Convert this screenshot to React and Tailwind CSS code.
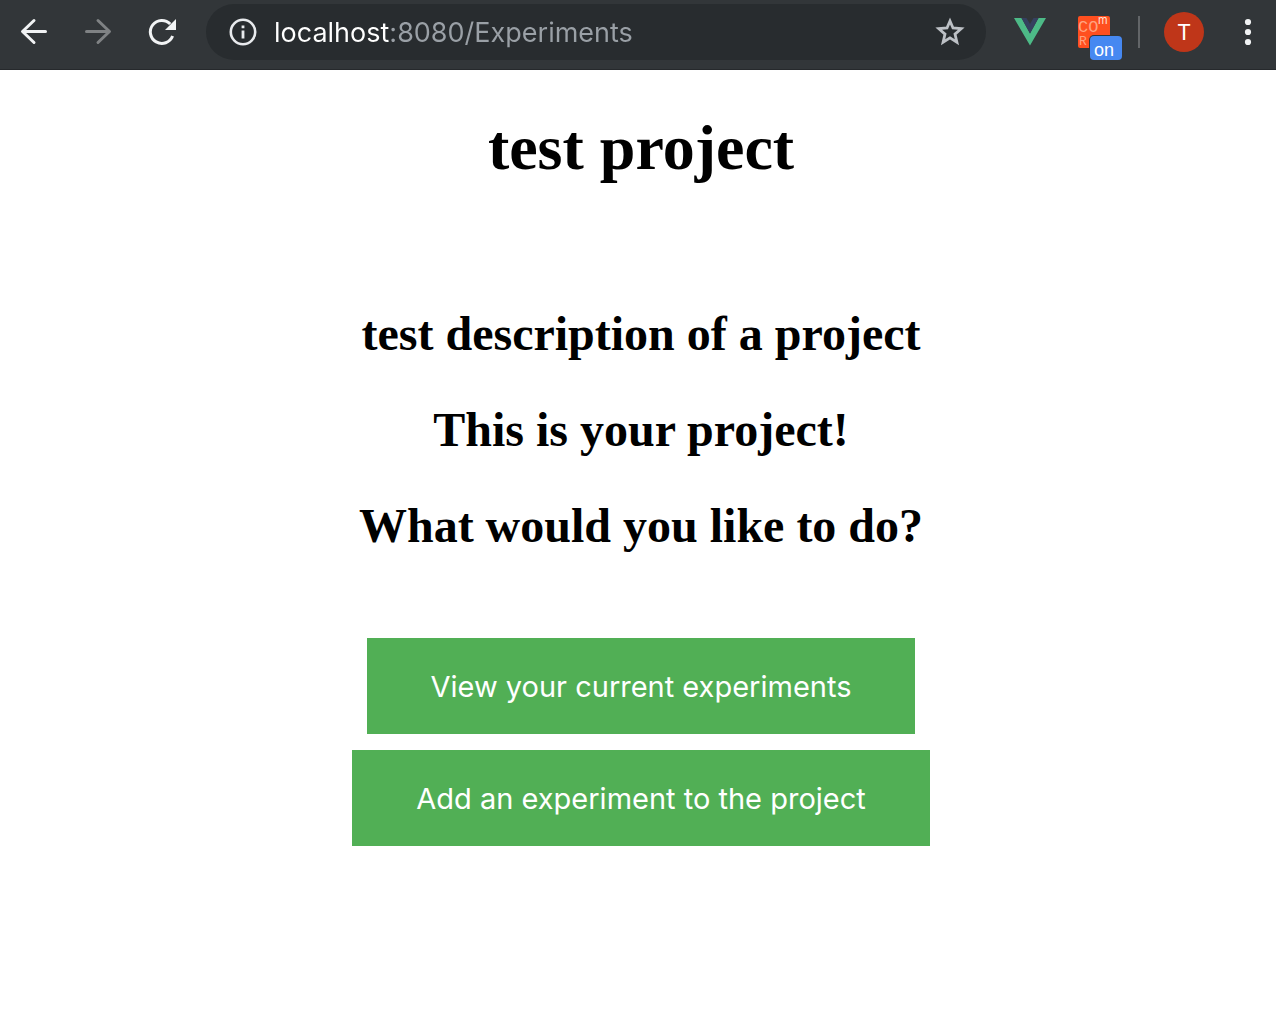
function IconButton({ label, children, disabled }) {
  return (
    <button type="button" aria-label={label} disabled={disabled} className="size-8 shrink-0">
      {children}
    </button>
  );
}

function BackIcon() {
  return (
    <svg viewBox="0 0 32 32" className="size-8" fill="none" stroke="#f1f3f4" strokeWidth="3" strokeLinecap="round" strokeLinejoin="round">
      <path d="M27.5 15.5H5M16 4.5L4.5 15.5L16 26.5" />
    </svg>
  );
}

function ForwardIcon() {
  return (
    <svg viewBox="0 0 32 32" className="size-8" fill="none" stroke="#7f8284" strokeWidth="3" strokeLinecap="round" strokeLinejoin="round">
      <path d="M4.5 15.5H27M16 4.5L27.5 15.5L16 26.5" />
    </svg>
  );
}

function ReloadIcon() {
  return (
    <svg viewBox="0 0 32 32" className="size-8">
      <path d="M26.6 20A11.5 11.5 0 1 1 24.2 8" fill="none" stroke="#f1f3f4" strokeWidth="3" />
      <path d="M30 3V14H19Z" fill="#f1f3f4" />
    </svg>
  );
}

function InfoIcon() {
  return (
    <svg viewBox="0 0 28 28" className="size-7">
      <circle cx="14" cy="14" r="12.2" fill="none" stroke="#e8eaed" strokeWidth="2.6" />
      <path d="M12.6 7.5h2.8v2.8h-2.8zM12.6 12.6h2.8v8h-2.8z" fill="#e8eaed" />
    </svg>
  );
}

function StarIcon() {
  return (
    <svg viewBox="0 0 32 32" className="size-8" fill="none" stroke="#bdc1c6" strokeWidth="2.8" strokeLinejoin="miter">
      <path d="M16 5L19 12L27.2 12.7L21 18.1L22.9 26.2L16 21.9L9.1 26.2L11 18.1L4.8 12.7L13 12Z" />
    </svg>
  );
}

function VueIcon() {
  return (
    <svg viewBox="0 0 32 32" className="size-8">
      <path d="M0 2H7.5L16 17.5L24.5 2H32L16 29.5Z" fill="#4dba87" />
      <path d="M7.5 2H12.5L16 8L19.5 2H24.5L16 17.5Z" fill="#35405f" />
    </svg>
  );
}

export default function App() {
  return (
    <div className="min-h-screen bg-white">
      <header className="flex items-center border-b border-[#26292c] bg-[#323639] pt-1 pr-3 pb-[9px] pl-[18px] font-['Inter',sans-serif]">
        <nav aria-label="History" className="mr-7 flex gap-8">
          <IconButton label="Back"><BackIcon /></IconButton>
          <IconButton label="Forward" disabled><ForwardIcon /></IconButton>
          <IconButton label="Reload"><ReloadIcon /></IconButton>
        </nav>
        <div className="flex h-14 min-w-0 flex-1 items-center rounded-full bg-[#282c2f] pr-5 pl-[23px]">
          <button type="button" aria-label="Site information" className="mr-[17px] size-7 shrink-0">
            <InfoIcon />
          </button>
          <input
            type="text"
            aria-label="Address"
            defaultValue="localhost:8080/Experiments"
            className="h-10 min-w-0 flex-1 bg-[linear-gradient(90deg,#ffffff_115px,#9aa0a6_115px)] bg-clip-text pt-0.5 text-[27px] text-transparent caret-white outline-none"
          />
          <IconButton label="Bookmark this page"><StarIcon /></IconButton>
        </div>
        <div className="ml-7 flex items-center">
          <IconButton label="Vue devtools"><VueIcon /></IconButton>
          <button type="button" aria-label="Cross-origin requests" className="relative ml-8 size-8 rounded-xs bg-[#ff4f1f]">
            <svg viewBox="0 0 32 32" className="size-8 overflow-visible" fill="#ffa27f" fontFamily="Liberation Mono, monospace">
              <text x="0" y="16" fontSize="17">CO</text>
              <text x="1" y="29" fontSize="13">R</text>
              <text x="20" y="8" fontSize="11" fill="#ffe0d4" fontFamily="Inter, sans-serif">m</text>
            </svg>
            <span className="absolute top-5 left-3 flex h-6 w-8 items-center justify-center rounded-sm bg-[#4688f1] pt-1 pr-1 font-['Liberation_Sans',sans-serif] text-lg text-white shadow-[0_0_0_1px_#323639]">
              on
            </span>
          </button>
          <span className="ml-7 h-8 w-0.5 bg-[#626568]" />
          <button type="button" aria-label="Profile" className="ml-6 flex size-10 items-center justify-center rounded-full bg-[#bf3619] font-['Roboto',sans-serif] text-[22px] text-white">
            T
          </button>
          <button type="button" aria-label="Menu" className="ml-7 size-8">
            <svg viewBox="0 0 32 32" className="size-8" fill="#f1f3f4">
              <circle cx="16" cy="6" r="3.1" />
              <circle cx="16" cy="16" r="3.1" />
              <circle cx="16" cy="26" r="3.1" />
            </svg>
          </button>
        </div>
      </header>

      <main className="flex flex-col items-center pt-[42px] pl-1.5 text-center font-['Liberation_Serif',serif] font-bold text-black">
        <h1 className="text-[64px] leading-[72px]">test project</h1>
        <div className="mt-[122px] flex flex-col gap-10 text-5xl leading-[56px]">
          <h2>test description of a project</h2>
          <h2>This is your project!</h2>
          <h2>What would you like to do?</h2>
        </div>
        <div className="mt-[84px] flex flex-col items-center gap-4 font-['Inter',sans-serif] text-[29px] font-normal text-white">
          <button type="button" className="h-24 bg-[#51af55] px-16 pt-0.5">View your current experiments</button>
          <button type="button" className="h-24 bg-[#51af55] px-16 pt-0.5">Add an experiment to the project</button>
        </div>
      </main>
    </div>
  );
}
